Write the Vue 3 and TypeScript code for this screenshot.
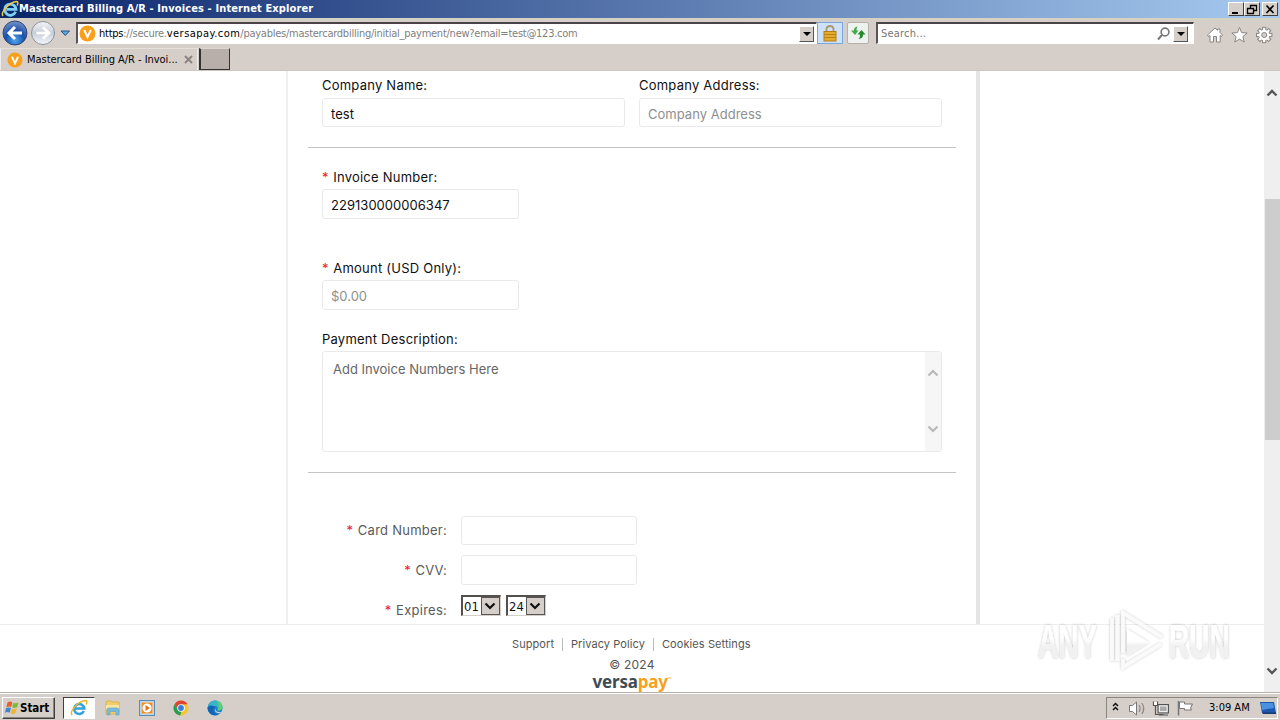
<script setup lang="ts">
interface FooterLink { label: string; width: string }
const links: FooterLink[] = [
  { label: 'Support', width: 'w-support' },
  { label: 'Privacy Policy', width: 'w-privacy' },
  { label: 'Cookies Settings', width: 'w-cookies' },
]
const teeth: number[] = [0, 45, 90, 135, 180, 225, 270, 315]
</script>

<template>
  <div class="screen">
    <header class="titlebar">
      <svg class="ie" width="18" height="18" viewBox="0 0 18 18">
        <path d="M14.6 11.8A5.6 5.6 0 1 1 15 9.3H5.6" fill="none" stroke="#7fd0f5" stroke-width="2.8" />
        <path d="M2 16C-1 12 9 2 15.500 1.500C17.500 1.600 17 4 16 5.500" fill="none" stroke="#f5c83a" stroke-width="1.500" />
      </svg>
      <span class="title">Mastercard Billing A/R - Invoices - Internet Explorer</span>
      <div class="winbtns">
        <span class="wb"><svg width="15" height="13"><path d="M3 10h6" stroke="#000" stroke-width="2" /></svg></span>
        <span class="wb"><svg width="15" height="13"><path d="M5.500 5V2.500h6v5H9M5 2.500h7M2.500 5.500h6v5h-6zM2 5.500h7" fill="none" stroke="#000" stroke-width="1.300" /></svg></span>
        <span class="wb last"><svg width="15" height="13"><path d="M3.500 2.500l7 7.500M10.500 2.500l-7 7.500" stroke="#000" stroke-width="1.700" /></svg></span>
      </div>
    </header>

    <nav class="navbar">
      <svg class="back" width="76" height="30" viewBox="0 0 76 30">
        <defs>
          <radialGradient id="bk" cx=".5" cy=".8" r=".8"><stop offset="0" stop-color="#4fa8ee" /><stop offset=".5" stop-color="#1a4fa8" /><stop offset="1" stop-color="#7795c8" /></radialGradient>
          <linearGradient id="fw" x2="0" y2="1"><stop offset="0" stop-color="#f2f4f7" /><stop offset=".5" stop-color="#c9cfd9" /><stop offset="1" stop-color="#f4f6fa" /></linearGradient>
        </defs>
        <circle cx="15" cy="15" r="12" fill="url(#bk)" stroke="#2d4672" stroke-width="1" />
        <path d="M22 15H10M15 9l-6 6 6 6" fill="none" stroke="#fff" stroke-width="3" />
        <circle cx="43" cy="15" r="11.500" fill="url(#fw)" stroke="#8b929e" stroke-width="1" />
        <path d="M36.500 15H48M43 9.500l6 5.500-6 5.500" fill="none" stroke="#fff" stroke-width="2.600" />
        <path d="M61 13h8.500l-4.200 4.500z" fill="#5ba8dd" stroke="#26508a" stroke-width="1" />
      </svg>
      <div class="address">
        <svg class="vp" width="17" height="17" viewBox="0 0 17 17"><circle cx="8.500" cy="8.500" r="8" fill="#f8a01c" /><path d="M5.200 5l3.300 7 3.300-7" fill="none" stroke="#fff" stroke-width="2" /></svg>
        <span class="url"><b>https</b>://secure.<b class="host">versapay.com</b>/payables/mastercardbilling/initial_payment/new?email=test@123.com</span>
        <span class="drop"><svg width="13" height="14"><path d="M3 5h8L7 9z" /></svg></span>
      </div>
      <div class="lock">
        <svg width="24" height="20" viewBox="0 0 24 20"><path d="M8.500 9V5.500a3.700 3.700 0 0 1 7 0V9" fill="none" stroke="#ad9767" stroke-width="1.800" /><rect x="6" y="8.500" width="12" height="9.500" fill="#e5ac2a" stroke="#b57c18" /><path d="M6 11.500h12M6 14.500h12" stroke="#b98018" /></svg>
      </div>
      <div class="refresh">
        <svg width="20" height="20" viewBox="0 0 20 20"><path d="M9.500 3.500C6.500 4 6 6 6 7.500H3L7 12l3.500-4.500H8.500Q8.300 5 9.500 3.500z" fill="#43a94a" /><path d="M10.500 16C14.500 15.500 15 13.500 15 11.500h2.500L13.500 7 9.500 11.500H12Q12.500 14.500 10.500 16z" fill="#23892d" /></svg>
      </div>
      <div class="search">
        <span>Search...</span>
        <svg class="glass" width="16" height="16" viewBox="0 0 16 16"><circle cx="9" cy="6" r="3.900" fill="none" stroke="#777" stroke-width="1.600" /><path d="M6 9l-4 4.500" stroke="#777" stroke-width="2" /></svg>
        <span class="drop"><svg width="13" height="14"><path d="M3 5h8L7 9z" /></svg></span>
      </div>
      <svg class="tools" width="68" height="20" viewBox="0 0 68 20" fill="#fff" stroke="#8a8582" stroke-width="1">
        <path d="M1.500 10L9 3l2.500 2.200V4h2.500v3.500l2.500 2.500-1 1.500-1.300-1V17H10.500v-5.500h-3V17H4v-6.500l-1.500 1z" />
        <path d="M33.500 2.500l2.100 5.100 5.500.4-4.200 3.600 1.300 5.400-4.700-2.900-4.700 2.900 1.300-5.400L25.900 8l5.500-.4z" />
        <g><rect v-for="t in teeth" :key="t" x="56.600" y="2.300" width="3.200" height="4" :transform="`rotate(${t} 58.200 10)`" /></g>
        <circle cx="58.200" cy="10" r="5.200" stroke="none" /><circle cx="58.200" cy="10" r="2.500" fill="#d6cec8" />
      </svg>
    </nav>

    <div class="tabs">
      <div class="tab">
        <svg width="16" height="16" viewBox="0 0 17 17"><circle cx="8.500" cy="8.500" r="8" fill="#f8a01c" /><path d="M5.200 5l3.300 7 3.300-7" fill="none" stroke="#fff" stroke-width="2" /></svg>
        <span>Mastercard Billing A/R - Invoi...</span>
        <svg class="close" width="9" height="9"><path d="M1 1l7 7M8 1L1 8" stroke="#8c8580" stroke-width="2" /></svg>
      </div>
      <div class="newtab"></div>
    </div>

    <main class="viewport">
      <div class="page">
        <section class="panel">
          <div class="pair">
            <div class="field"><label>Company Name:</label><div class="input wide">test</div></div>
            <div class="field"><label>Company Address:</label><div class="input wide ph">Company Address</div></div>
          </div>
          <hr>
          <div class="field inv"><label><i>*</i> Invoice Number:</label><div class="input mid num">229130000006347</div></div>
          <div class="field amt"><label><i>*</i> Amount (USD Only):</label><div class="input mid ph">$0.00</div></div>
          <div class="field desc">
            <label>Payment Description:</label>
            <div class="area">
              <span>Add Invoice Numbers Here</span>
              <div class="areabar">
                <svg width="12" height="8"><path d="M1.500 6.500L6 2l4.500 4.500" fill="none" stroke="#b9b9b9" stroke-width="2.200" /></svg>
                <svg width="12" height="8"><path d="M1.500 1.500L6 6l4.500-4.500" fill="none" stroke="#b9b9b9" stroke-width="2.200" /></svg>
              </div>
            </div>
          </div>
          <hr class="second">
          <div class="card">
            <label><i>*</i> Card Number:</label><div class="input"></div>
            <label><i>*</i> CVV:</label><div class="input"></div>
            <label class="exp"><i>*</i> Expires:</label>
            <div class="selects">
              <span v-for="v in ['01', '24']" :key="v" class="select">{{ v }}<span class="arrow"><svg width="16" height="16"><path d="M3.500 5.500L8 10l4.500-4.500" fill="none" stroke="#111" stroke-width="2.200" /></svg></span></span>
            </div>
          </div>
        </section>
        <footer class="foot">
          <div class="links"><span v-for="l in links" :key="l.label" :class="l.width">{{ l.label }}</span></div>
          <div class="copy">© 2024</div>
          <div class="brand">versa<span>pay</span><sup>™</sup></div>
        </footer>
      </div>
      <aside class="scroll">
        <svg width="12" height="9"><path d="M1.500 7.500L6 3l4.500 4.500" fill="none" stroke="#555" stroke-width="2.300" /></svg>
        <div class="thumb"></div>
        <svg width="12" height="9"><path d="M1.500 1.500L6 6l4.500-4.500" fill="none" stroke="#555" stroke-width="2.300" /></svg>
      </aside>
    </main>

    <footer class="taskbar">
      <div class="start">
        <svg width="15" height="15" viewBox="0 0 15 15"><path d="M2.500 2.500Q5 .8 7.300 2.200L6.200 7Q4 5.800 1.300 7.200z" fill="#e5602a" /><path d="M8.200 2.700q2.300 1.300 5.300-.2l-1.300 4.700q-2.700 1.500-5 .1z" fill="#7dbb3d" /><path d="M1 8.200q2.500-1.500 4.900-.2l-1.200 4.700Q2.500 11.500 0 12.800z" fill="#3c86d2" /><path d="M6.900 8.500q2.300 1.400 5-.1l-1.300 4.700q-2.500 1.500-4.900.1z" fill="#f2b62c" /></svg>
        <span>Start</span>
      </div>
      <div class="active">
        <svg width="18" height="18" viewBox="0 0 18 18"><path d="M13.800 12A5 5 0 1 1 14.200 9.500H5" fill="none" stroke="#35a2e0" stroke-width="2.600" /><path d="M2 16C-1 12 9 2 15.500 1.500C17.500 1.600 17 4 16 5.500" fill="none" stroke="#e9b52c" stroke-width="1.400" /></svg>
      </div>
      <svg class="folder" width="16" height="16" viewBox="0 0 16 16"><path d="M1 3l1-2h4l1 1h7v12H1z" fill="#f0ce6c" stroke="#d9b253" /><path d="M1 5h13v4H1z" fill="#f8e6a2" /><path d="M2 15v-5q0-2 2-2h8q2 0 2 2v5h-3v-3.500H5V15z" fill="#79b9dc" stroke="#6aa6c7" stroke-width=".7" /></svg>
      <svg class="media" width="16" height="16" viewBox="0 0 16 16"><rect x=".5" y=".5" width="15" height="15" fill="#b5d4ee" stroke="#5a8cb8" /><rect x="2.500" y="2.500" width="11" height="11" fill="#f08b22" stroke="#f7c48e" stroke-width=".6" /><circle cx="8" cy="8" r="4.600" fill="#fff" /><path d="M6.500 5L11 8l-4.500 3z" fill="#e87412" /></svg>
      <svg class="chrome" width="16" height="16" viewBox="0 0 16 16"><circle cx="8" cy="8" r="7.500" fill="#f7c62c" /><path d="M1.500 4.300A7.500 7.500 0 0 1 14.500 4.200L8 4.600 5 9.800z" fill="#de4335" /><path d="M1.500 4.300L5 10l3.500 1.500-1.300 4A7.500 7.500 0 0 1 1.500 4.300z" fill="#2c9b4f" /><circle cx="8" cy="8" r="3.800" fill="#fff" /><circle cx="8" cy="8" r="2.900" fill="#3d7be0" /></svg>
      <svg class="edge" width="16" height="16" viewBox="0 0 16 16"><circle cx="8" cy="8" r="7.500" fill="#1d7ed0" /><path d="M.8 7A7.400 7.400 0 0 1 15.500 7c0 3-3 4-5 3.200 1.200-2-.5-4.200-3-4.200C4 6 1.500 7 .8 7z" fill="#37b5c8" /><path d="M9 .6A7.400 7.400 0 0 1 15.500 7c0 3-3 4-5 3.200C12 7 12 3 9 .6z" fill="#5ccf74" /><path d="M.6 7.500C3 4 7.500 5.500 8 8c-3 1-2 6 3.500 6.500A7.500 7.500 0 0 1 .6 7.500z" fill="#1463b5" /><path d="M9 8c-1.500 1.500 0 4 3.500 4 1.500 0 2.200-.4 2.500-.6-1 1.800-4 2.200-5.500 1.200C7.300 11.500 7.500 9 9 8z" fill="#d6cec8" /></svg>
      <div class="tray">
        <svg width="80" height="20" viewBox="0 0 80 20">
          <path d="M2 8l2.500-2.500L7 8M2 12l2.500-2.500L7 12" fill="none" stroke="#111" stroke-width="1.500" />
          <path d="M18.500 7.500h3L25.500 4v13l-4-3.500h-3z" fill="#fff" stroke="#777" />
          <path d="M28 7q2.200 3.500 0 7M30.800 5q3.800 5.500 0 11" fill="none" stroke="#8d8885" stroke-width="1.200" />
          <rect x="47" y="6.500" width="10.500" height="8.500" fill="#b9b9b9" stroke="#555" /><rect x="48.500" y="8" width="7.500" height="5.500" fill="#aaa" stroke="#fff" stroke-width=".8" />
          <path d="M42.500 3.500v4h4v-4M44.500 7.500v9h8M48 17h9" fill="none" stroke="#555" stroke-width="1.200" /><path d="M43 4h3v3h-3z" fill="#fff" />
          <path d="M67.500 3v14.500" stroke="#777" stroke-width="1.500" /><path d="M68.500 4h5v2h8l-2 4 1 2h-7v-1.500h-5z" fill="#fff" stroke="#777" />
        </svg>
        <span class="clock">3:09 AM</span>
        <svg class="desk" width="16" height="15" viewBox="0 0 16 15"><path d="M0 2h14l2 11H2z" fill="#1c57ad" /><path d="M1 3h12l1 5L2 10z" fill="#4a92e0" /><path d="M2 12.500h14v1.500H3z" fill="#16396e" /></svg>
      </div>
    </footer>

    <div class="watermark">
      <svg width="214" height="76" viewBox="0 0 214 76">
        <defs>
          <filter id="sh" x="-10%" y="-15%" width="120%" height="130%"><feDropShadow dx="0" dy="0" stdDeviation="1.8" flood-color="#000" flood-opacity=".26" /></filter>
          <linearGradient id="wm" x2="0" y2="1"><stop offset=".45" stop-color="#fff" /><stop offset=".6" stop-color="#f1f1f1" /></linearGradient>
        </defs>
        <g filter="url(#sh)" fill="url(#wm)">
          <text transform="translate(9 55) scale(1 1.75)">ANY</text>
          <text transform="translate(140 55) scale(1 1.75)">RUN</text>
          <path d="M98 26v27l22-13.500z" />
          <path d="M94 50V10l39 24M83 15v43M88.500 12v46M94 56v8l38-23" fill="none" stroke="#fafafa" stroke-width="3.600" />
        </g>
      </svg>
    </div>
  </div>
</template>

<style>
html, body { overflow: hidden; background: #fff; }
</style>

<style scoped>
* { box-sizing: border-box; }
.screen { position: relative; width: 1280px; height: 720px; display: flex; flex-direction: column; overflow: hidden; background: #fff; font-family: "DejaVu Sans Condensed", "DejaVu Sans", sans-serif; font-size: 11px; color: #000; white-space: nowrap; }
svg { display: block; flex: none; }
.titlebar { height: 18px; flex: none; display: flex; align-items: center; background: linear-gradient(90deg, #0a246a, #a6caf0); padding-left: 1px; }
.title { color: #fff; font: bold 11px/18px "DejaVu Sans Condensed", "DejaVu Sans", sans-serif; letter-spacing: .12px; }
.winbtns { margin-left: auto; display: flex; padding-right: 2px; }
.wb { width: 16px; height: 14px; background: #d6cec8; border: 1px solid; border-color: #fff #404040 #404040 #fff; }
.wb svg { width: 14px; height: 12px; }
.wb.last { margin-left: 2px; }
.navbar { height: 30px; flex: none; display: flex; background: #d6cec8; border-top: 2px solid #d5d2c3; align-items: flex-start; }
.back { margin-top: -2px; }
.address { width: 741px; height: 22px; margin-top: 2px; background: #fff; border: 1px solid #fff; border-top: 2px solid #4a4348; border-left: 2px solid #5d5658; display: flex; align-items: center; padding: 0 2px 0 1px; }
.url { margin-left: 3px; color: #808080; font-size: 11px; letter-spacing: -.25px; }
.url b { color: #000; font-weight: 400; }
.url .host { letter-spacing: .45px; }
.drop { margin-left: auto; width: 15px; height: 16px; background: #d6cec8; border: 1px solid; border-color: #fff #555 #555 #fff; }
.lock { width: 26px; height: 22px; margin: 2px 0 0; border: 1px solid #7aa7e0; background: #cde1f9; }
.refresh { width: 22px; height: 22px; margin: 2px 0 0 4px; border: 1px solid #b5b0a9; background: #eef2ee; border-radius: 2px; }
.search { width: 318px; height: 22px; margin: 2px 1px 0 7px; background: #fff; border: 1px solid #fff; border-top: 2px solid #4a4348; border-left: 2px solid #5d5658; display: flex; align-items: center; padding: 0 5px 0 3px; color: #777; letter-spacing: .2px; }
.search .glass { margin-left: auto; }
.search .drop { margin-left: 1px; }
.tools { margin: 5px 0 0 11px; }
.tabs { height: 23px; flex: none; background: #d6cec8; display: flex; border-bottom: 1px solid #cfc6c0; }
.tab { width: 198px; height: 22px; display: flex; align-items: center; padding-left: 6px; border-left: 1px solid #eee; border-right: 1px solid #f0ece8; border-top: 1px solid #e6e0da; }
.tab span { margin-left: 4px; letter-spacing: -.04px; }
.close { margin-left: 6px; }
.newtab { margin: 0 0 0 1px; width: 31px; height: 22px; background: #b8afab; border: 1px solid #333; border-left: 2px solid #333; border-top-color: #ddd5d0; }
.viewport { height: 621px; flex: none; display: flex; overflow: hidden; }
.page { width: 1264px; display: flex; flex-direction: column; font-family: Inter, "Liberation Sans", sans-serif; font-size: 13px; color: #111; }
.panel { width: 694px; height: 553px; margin-left: 286px; border-left: 2px solid #efefef; border-right: 4px solid #e5e5e5; padding-top: 6px; overflow: hidden; }
.pair { display: flex; gap: 14px; padding-left: 34px; }
label { display: block; height: 16px; line-height: 16px; letter-spacing: .23px; margin-bottom: 4px; }
label i { margin-right: .6px; }
.pair label { margin-bottom: 5px; }
i { color: #e8192c; font-style: normal; }
.input { height: 30px; border: 1px solid #e9e9e9; border-radius: 3px; padding: 1px 8px 0; line-height: 28px; background: #fff; }
.wide { width: 303px; height: 29px; letter-spacing: .02px; }
.mid { width: 197px; }
.ph { color: #8f8f8f; }
.num { letter-spacing: .03px; }
hr { height: 1px; border: 0; background: #c4c4c4; margin: 20px 20px 0; }
.inv, .amt, .desc { padding-left: 34px; }
.inv { margin-top: 21px; }
.amt { margin-top: 41px; }
.desc { margin-top: 21px; }
.area { width: 620px; height: 101px; border: 1px solid #e9e9e9; border-radius: 3px; display: flex; justify-content: space-between; overflow: hidden; color: #666; }
.area span { padding: 9px 0 0 10px; line-height: 17px; }
.areabar { width: 16px; background: #f6f6f6; display: flex; flex-direction: column; justify-content: space-between; padding: 17px 2px 18px; }
.card { margin-top: 43px; padding-left: 34px; display: grid; grid-template-columns: 125px 176px; column-gap: 14px; row-gap: 10px; color: #5a5a5a; }
.card label { text-align: right; line-height: 30px; height: 30px; margin: 0; letter-spacing: .25px; }
.card label:first-child { line-height: 28px; }
.card .input { height: 29px; }
.card > :nth-child(-n+2) { height: 29px; }
.card > :nth-child(4) { height: 30px; }
.selects { display: flex; gap: 5px; }
.select { width: 40px; height: 21px; border: 2px solid #55504d; border-right: 1px solid #d6cec8; border-bottom: 1px solid #d6cec8; background: #fff; display: flex; justify-content: space-between; align-items: center; color: #111; font: 13px "DejaVu Sans Condensed", sans-serif; padding-left: 1px; }
.arrow { width: 19px; height: 18px; background: #d6cec8; border: 1px solid #555; }
.foot { height: 68px; border-top: 1px solid #eee; display: flex; flex-direction: column; align-items: center; color: #555; }
.links { margin-top: 13px; height: 13px; display: flex; font-size: 11px; line-height: 13px; letter-spacing: .08px; }
.links span + span { border-left: 1px solid #bbb; padding-left: 8px; }
.w-support { width: 50px; }
.w-privacy { width: 91px; }
.w-cookies { width: 99px; }
.copy { margin-top: 6px; font-size: 12px; line-height: 16px; letter-spacing: .2px; }
.brand { display: flex; height: 18px; line-height: 17px; font: bold 17px/17px "Noto Sans", sans-serif; color: #404b55; letter-spacing: -.2px; }
.brand span { color: #f8a01c; }
.brand sup { font-size: 5px; line-height: 12px; color: #f8a01c; }
.scroll { width: 16px; background: #efefef; padding: 17px 1px 16px 2px; display: flex; flex-direction: column; }
.thumb { width: 15px; height: 241px; margin: 102px 0 auto -1px; background: #cdcdcd; }
.taskbar { height: 28px; flex: none; background: #d6cec8; border-top: 1px solid #b7b0aa; box-shadow: inset 0 1px #fff; display: flex; align-items: center; padding: 2px 2px 0; }
.start { width: 53px; height: 22px; border: 1px solid; border-color: #fff #404040 #404040 #fff; box-shadow: inset -1px -1px #8b8580; display: flex; align-items: center; padding-left: 2px; }
.start span { font-weight: bold; font-size: 11.5px; letter-spacing: -.05px; }
.active { width: 32px; height: 22px; margin-left: 8px; background: #fff; border: 1px solid; border-color: #404040 #fff #fff #404040; padding: 1px 6px; }
.folder { margin-left: 10px; }
.media { margin-left: 18px; }
.chrome { margin-left: 18px; }
.edge { margin-left: 18px; }
.tray { width: 172px; height: 22px; margin-left: auto; border: 1px solid; border-color: #8b8580 #fff #fff #8b8580; display: flex; align-items: center; padding-left: 4px; }
.tray > svg:first-child { overflow: visible; }
.clock { margin-left: 18px; width: 42px; font-size: 11px; letter-spacing: 0; }
.desk { margin-left: 9px; }
.watermark { position: absolute; left: 1029px; top: 603px; opacity: .95; }
.watermark text { font: bold 28px "Liberation Sans", sans-serif; }
</style>
